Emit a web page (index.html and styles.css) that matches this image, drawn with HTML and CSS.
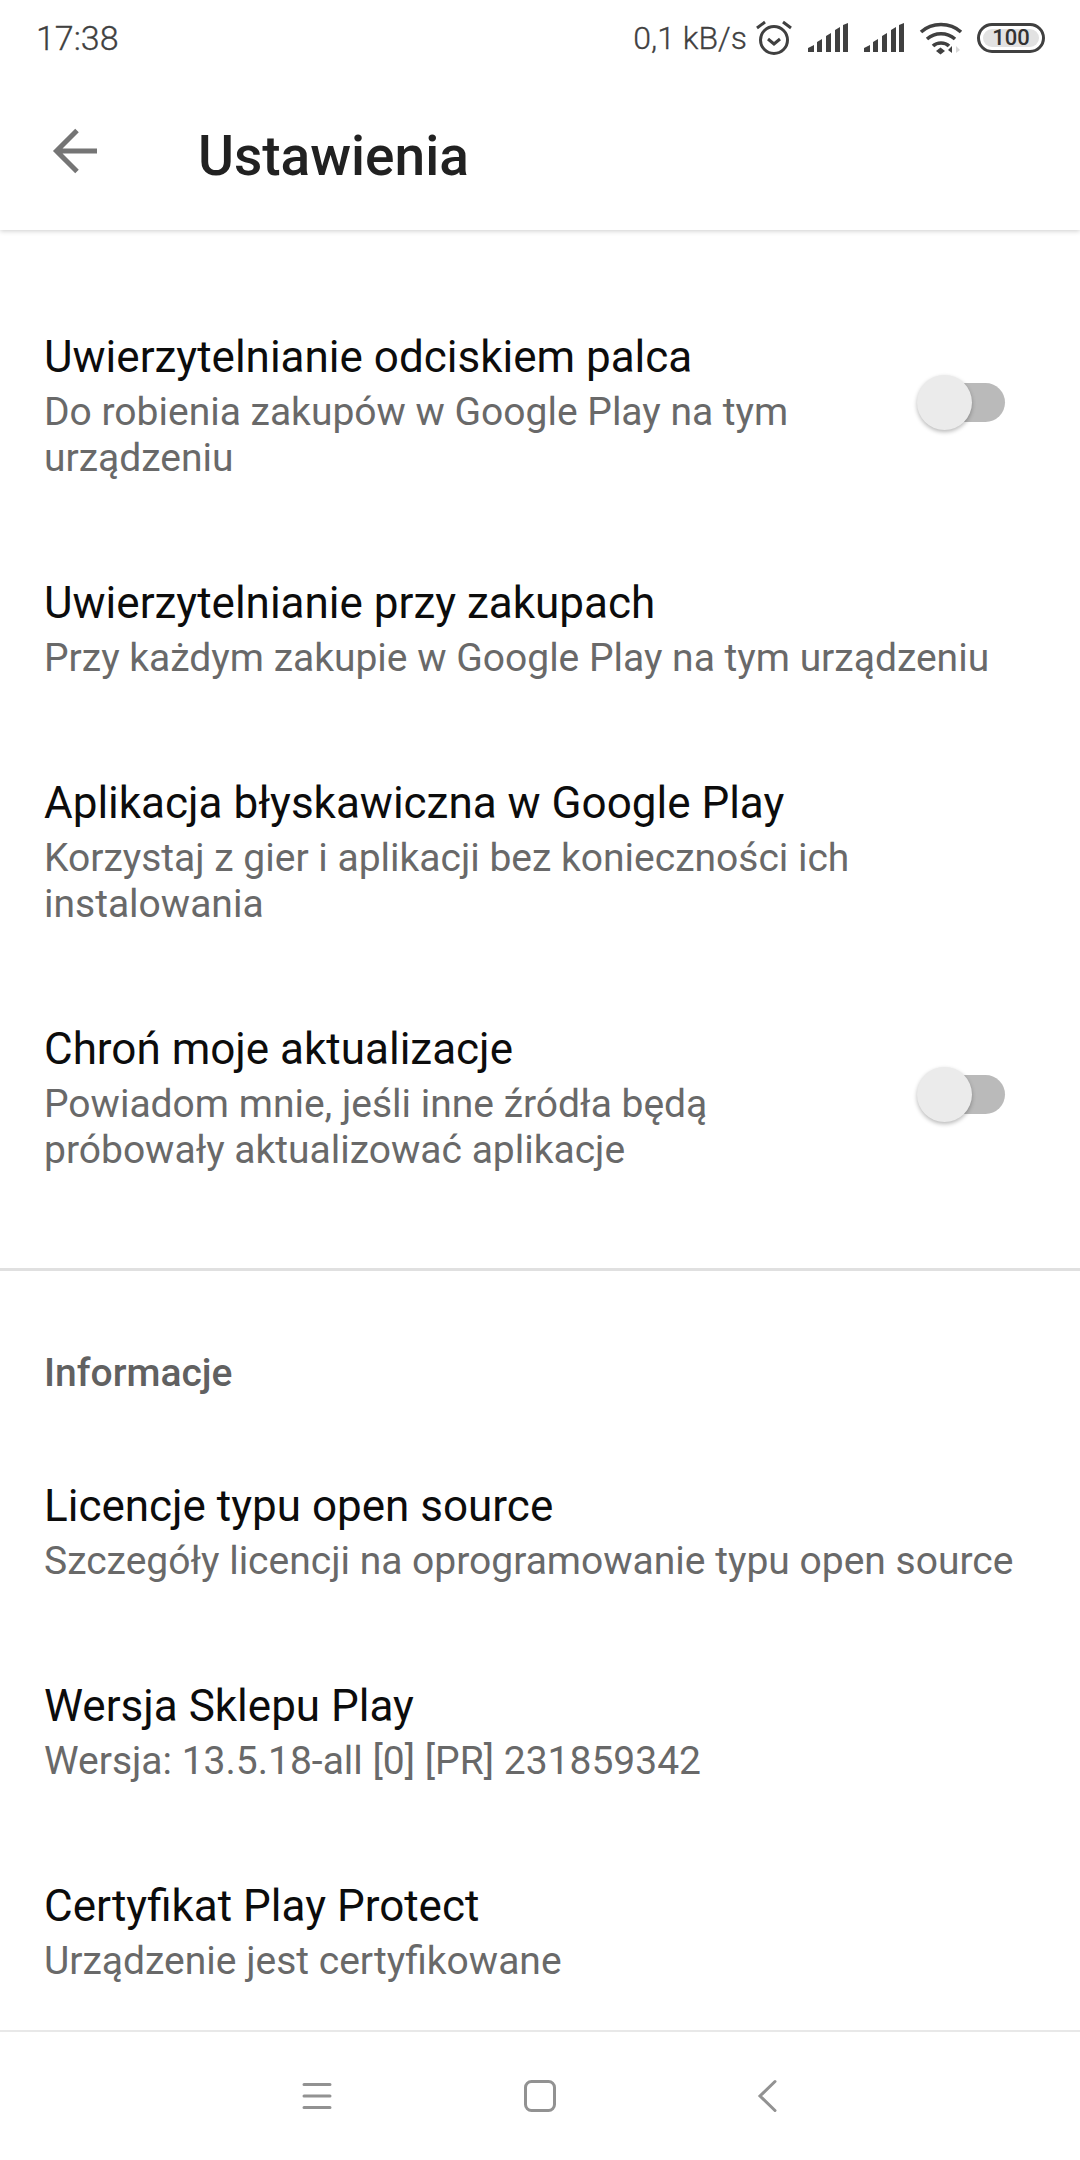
FILE: index.html
```html
<!DOCTYPE html>
<html lang="pl">
<head>
  <meta charset="UTF-8" />
  <title>Ustawienia</title>
  <link rel="stylesheet" href="styles.css">
</head>
<body>
  <div class="phone">
    <div class="status-bar">
      <span class="clock">17:38</span>
      <div class="status-right">
        <span class="speed">0,1 kB/s</span>
        <svg class="alarm" width="38" height="36" viewBox="0 0 38 36">
          <circle cx="19" cy="20" r="13.5" fill="none" stroke="#404040" stroke-width="3"/>
          <path d="M13 19l6 5 6-5" fill="none" stroke="#404040" stroke-width="3"/>
          <path d="M2 8l8-6M36 8l-8-6" fill="none" stroke="#404040" stroke-width="3"/>
        </svg>
        <svg class="signal" width="42" height="30" viewBox="0 0 42 30">
          <path d="M1 29v-4l6-3v7zM10 29v-10l5-3v13zM19 29v-16l5-3v19zM28 29v-22l5-3v25zM36 29v-27l5-2v29z" fill="#404040"/>
        </svg>
        <svg class="signal" width="42" height="30" viewBox="0 0 42 30">
          <path d="M1 29v-4l6-3v7zM10 29v-10l5-3v13zM19 29v-16l5-3v19zM28 29v-22l5-3v25zM36 29v-27l5-2v29z" fill="#404040"/>
        </svg>
        <svg class="wifi" width="44" height="34" viewBox="0 0 44 34">
          <path d="M2 11c11-10 29-10 40 0M8 18c8-7 20-7 28 0M14 25c4-4 12-4 16 0" fill="none" stroke="#404040" stroke-width="3.6"/>
          <path d="M17 30l4.500-3.500 4.500 3.500-4.500 3.500z" fill="#404040"/>
          <path d="M33 25v7l-4-3z" fill="#404040"/>
          <path d="M37 25v7l4-3z" fill="#d8d8d8"/>
        </svg>
        <div class="battery"><span class="battery-level">100</span></div>
      </div>
    </div>

    <header class="app-bar">
      <svg class="back" width="48" height="48" viewBox="0 0 48 48">
        <path d="M45 24H6M25 3.500L4.500 24 25 44.500" fill="none" stroke="#757575" stroke-width="5"/>
      </svg>
      <h1>Ustawienia</h1>
    </header>

    <main class="content">
      <section class="group first">
        <div class="row with-toggle">
          <div class="row-text">
            <div class="row-title">Uwierzytelnianie odciskiem palca</div>
            <div class="row-sub">Do robienia zakupów w Google Play na tym urządzeniu</div>
          </div>
          <div class="toggle"><span class="knob"></span></div>
        </div>
        <div class="row">
          <div class="row-text">
            <div class="row-title">Uwierzytelnianie przy zakupach</div>
            <div class="row-sub">Przy każdym zakupie w Google Play na tym urządzeniu</div>
          </div>
        </div>
        <div class="row">
          <div class="row-text">
            <div class="row-title">Aplikacja błyskawiczna w Google Play</div>
            <div class="row-sub">Korzystaj z gier i aplikacji bez konieczności ich instalowania</div>
          </div>
        </div>
        <div class="row with-toggle">
          <div class="row-text">
            <div class="row-title">Chroń moje aktualizacje</div>
            <div class="row-sub">Powiadom mnie, jeśli inne źródła będą próbowały aktualizować aplikacje</div>
          </div>
          <div class="toggle"><span class="knob"></span></div>
        </div>
      </section>

      <section class="group">
        <h2>Informacje</h2>
        <div class="row">
          <div class="row-text">
            <div class="row-title">Licencje typu open source</div>
            <div class="row-sub">Szczegóły licencji na oprogramowanie typu open source</div>
          </div>
        </div>
        <div class="row">
          <div class="row-text">
            <div class="row-title">Wersja Sklepu Play</div>
            <div class="row-sub">Wersja: 13.5.18-all [0] [PR] 231859342</div>
          </div>
        </div>
        <div class="row">
          <div class="row-text">
            <div class="row-title">Certyfikat Play Protect</div>
            <div class="row-sub">Urządzenie jest certyfikowane</div>
          </div>
        </div>
      </section>
    </main>

    <nav class="nav-bar">
      <svg width="30" height="28" viewBox="0 0 30 28">
        <path d="M2 2.500h26M2 14h26M2 25.500h26" fill="none" stroke="#929292" stroke-width="3" stroke-linecap="round"/>
      </svg>
      <svg width="32" height="32" viewBox="0 0 32 32">
        <rect x="1.500" y="1.500" width="29" height="29" rx="6" fill="none" stroke="#929292" stroke-width="3"/>
      </svg>
      <svg class="nav-back" width="20" height="34" viewBox="0 0 20 34">
        <path d="M18 2.500L3 17l15 14.500" fill="none" stroke="#929292" stroke-width="3" stroke-linecap="round"/>
      </svg>
    </nav>
  </div>
</body>
</html>
```

FILE: styles.css
```css
* {
  box-sizing: border-box;
}

html, body {
  margin: 0;
  padding: 0;
  background: #fff;
}

body {
  font-family: Roboto, "Liberation Sans", sans-serif;
}

.phone {
  width: 1080px;
  height: 2160px;
  display: flex;
  flex-direction: column;
  overflow: hidden;
}

.status-bar {
  height: 78px;
  flex: none;
  display: flex;
  align-items: center;
  justify-content: space-between;
  padding: 0 35px 2px 36px;
  color: #404040;
  background: #fff;
  position: relative;
  z-index: 1;
}

.clock {
  font-size: 34px;
  font-weight: 300;
  -webkit-text-stroke: .3px #404040;
}

.status-right {
  display: flex;
  align-items: center;
}

.speed {
  font-size: 32px;
  font-weight: 300;
  -webkit-text-stroke: .3px #404040;
  margin-right: 8px;
}

.alarm {
  margin-right: 14px;
}

.signal {
  margin-right: 14px;
}

.wifi {
  margin-right: 14px;
}

.battery {
  width: 68px;
  height: 30px;
  border: 3px solid #404040;
  border-radius: 15px;
  padding: 3px;
  display: flex;
}

.battery-level {
  flex: 1;
  background: #e2e2e2;
  border-radius: 10px;
  color: #333;
  font-size: 22px;
  line-height: 18px;
  text-align: center;
  font-weight: 500;
}

.app-bar {
  height: 152px;
  flex: none;
  display: flex;
  align-items: center;
  padding: 0 0 2px 52px;
  background: #fff;
  box-shadow: 0 1px 5px rgba(0, 0, 0, .2);
  position: relative;
}

.back {
  flex: none;
  margin-top: -4px;
}

h1 {
  margin: 6px 0 0 98px;
  font-size: 55px;
  font-weight: 500;
  color: #212121;
}

.content {
  flex: 1;
  min-height: 0;
}

.group.first {
  padding: 52px 0 48px;
  border-bottom: 3px solid #e0e0e0;
}

h2 {
  margin: 0;
  padding: 73px 44px 29px;
  font-size: 39px;
  line-height: 58px;
  font-weight: 500;
  color: #616161;
}

.row {
  display: flex;
  align-items: center;
  justify-content: space-between;
  padding: 46px 44px 47px;
}

.row-text {
  flex: 1;
  min-width: 0;
}

.with-toggle .row-text {
  max-width: 830px;
}

.row-title {
  font-size: 44px;
  line-height: 58px;
  color: #0c0c0c;
}

.row-sub {
  margin-top: 3px;
  font-size: 39px;
  line-height: 46px;
  color: #696969;
}

.toggle {
  position: relative;
  width: 75px;
  height: 39px;
  margin: -4px 31px 0 0;
  border-radius: 20px;
  background: #bababa;
  flex: none;
}

.knob {
  position: absolute;
  left: -13px;
  top: -8px;
  width: 55px;
  height: 55px;
  border-radius: 50%;
  background: #ebebeb;
  box-shadow: 0 2px 4px rgba(0, 0, 0, .28);
}

.nav-bar {
  height: 130px;
  flex: none;
  border-top: 2px solid #e8e8e8;
  display: flex;
  align-items: center;
  padding: 0 0 0 302px;
  gap: 192px;
}

.nav-back {
  margin-left: 9px;
}
```
